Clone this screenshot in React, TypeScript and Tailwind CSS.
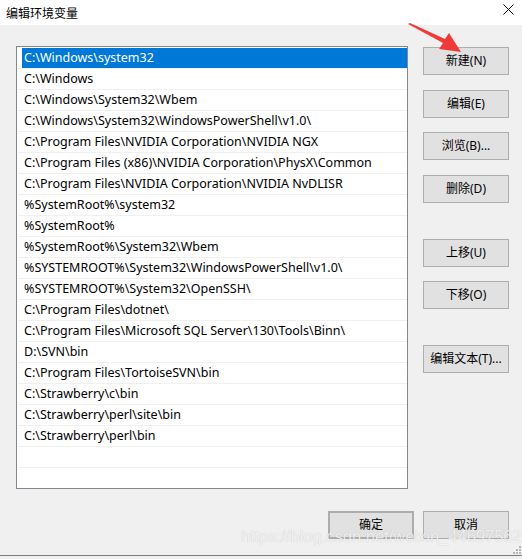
import React from 'react';

const paths = [
  'C:\\Windows\\system32',
  'C:\\Windows',
  'C:\\Windows\\System32\\Wbem',
  'C:\\Windows\\System32\\WindowsPowerShell\\v1.0\\',
  'C:\\Program Files\\NVIDIA Corporation\\NVIDIA NGX',
  'C:\\Program Files (x86)\\NVIDIA Corporation\\PhysX\\Common',
  'C:\\Program Files\\NVIDIA Corporation\\NVIDIA NvDLISR',
  '%SystemRoot%\\system32',
  '%SystemRoot%',
  '%SystemRoot%\\System32\\Wbem',
  '%SYSTEMROOT%\\System32\\WindowsPowerShell\\v1.0\\',
  '%SYSTEMROOT%\\System32\\OpenSSH\\',
  'C:\\Program Files\\dotnet\\',
  'C:\\Program Files\\Microsoft SQL Server\\130\\Tools\\Binn\\',
  'D:\\SVN\\bin',
  'C:\\Program Files\\TortoiseSVN\\bin',
  'C:\\Strawberry\\c\\bin',
  'C:\\Strawberry\\perl\\site\\bin',
  'C:\\Strawberry\\perl\\bin',
  '',
  '',
];

const WinButton = ({ children, className = '' }: { children: React.ReactNode; className?: string }) => (
  <div
    className={`flex h-[28px] w-[86px] items-center justify-center border border-[#adadad] bg-[#e1e1e1] text-[12px] text-black ${className}`}
  >
    {children}
  </div>
);

export default function App() {
  return (
    <div className="relative h-[559px] w-[522px] overflow-hidden bg-[#f0f0f0] font-['Noto_Sans','Noto_Sans_CJK_SC',sans-serif] text-[12px] text-black">
      {/* title bar */}
      <div className="flex h-[25px] items-center justify-between bg-white pl-[6px] pr-[8px]">
        <span className="font-['Noto_Sans_CJK_SC',sans-serif] text-[12px] leading-none">编辑环境变量</span>
        <svg width="11" height="11" viewBox="0 0 11 11" className="mb-[6px]">
          <path d="M0.5 0.5 L10.5 10.5 M10.5 0.5 L0.5 10.5" stroke="#000" strokeWidth="1" />
        </svg>
      </div>

      <div className="flex h-[531px] flex-col border-b border-[#7a7a7a]">
        <div className="flex pl-[16px] pt-[21px]">
          {/* path list */}
          <div className="h-[443px] w-[392px] overflow-hidden border border-[#828790] bg-white pt-[1px] text-[12.5px]">
            {paths.map((p, i) => (
              <div key={i} className="ml-[1px] border-b border-[#f0f0f0]">
                <div
                  className={`ml-[4px] flex h-[20px] items-center whitespace-nowrap pl-[2px] pt-[1px] ${
                    i === 0 ? 'bg-[#0078d7] text-white' : ''
                  }`}
                >
                  {p}
                </div>
              </div>
            ))}
          </div>

          {/* side buttons */}
          <div className="ml-[15px] flex flex-col pt-[1px]">
            <WinButton>新建(N)</WinButton>
            <WinButton className="mt-[15px]">编辑(E)</WinButton>
            <WinButton className="mt-[14px]">浏览(B)...</WinButton>
            <WinButton className="mt-[15px]">删除(D)</WinButton>
            <WinButton className="mt-[36px]">上移(U)</WinButton>
            <WinButton className="mt-[14px]">下移(O)</WinButton>
            <WinButton className="mt-[36px]">编辑文本(T)...</WinButton>
          </div>
        </div>

        {/* bottom buttons */}
        <div className="mt-[22px] flex justify-end gap-[9px] pr-[13px]">
          <WinButton className="border-2 border-[#0078d7]">确定</WinButton>
          <WinButton>取消</WinButton>
        </div>
      </div>

      {/* resize grip */}
      <svg width="8" height="8" viewBox="0 0 8 8" className="absolute left-[513px] top-[546px]">
        <rect x="6" y="0" width="2" height="2" fill="#b5b5b5" />
        <rect x="3" y="3" width="2" height="2" fill="#b5b5b5" />
        <rect x="6" y="3" width="2" height="2" fill="#b5b5b5" />
        <rect x="0" y="6" width="2" height="2" fill="#b5b5b5" />
        <rect x="3" y="6" width="2" height="2" fill="#b5b5b5" />
        <rect x="6" y="6" width="2" height="2" fill="#b5b5b5" />
      </svg>

      {/* red annotation arrow */}
      <svg width="70" height="40" viewBox="0 0 70 40" className="absolute left-[400px] top-[18px]">
        <polygon points="8,6 10,5 45,21 49,15 61,34 39,31 43,25" fill="#f03a3a" />
      </svg>

      {/* watermark */}
      <div className="absolute left-[241px] top-[528px] font-['Liberation_Sans',sans-serif] text-[16.5px] leading-none text-white/80 [text-shadow:0_0_1px_rgba(0,0,0,0.25)]">
        https://blog.csdn.net/weixin_44697562
      </div>
    </div>
  );
}
